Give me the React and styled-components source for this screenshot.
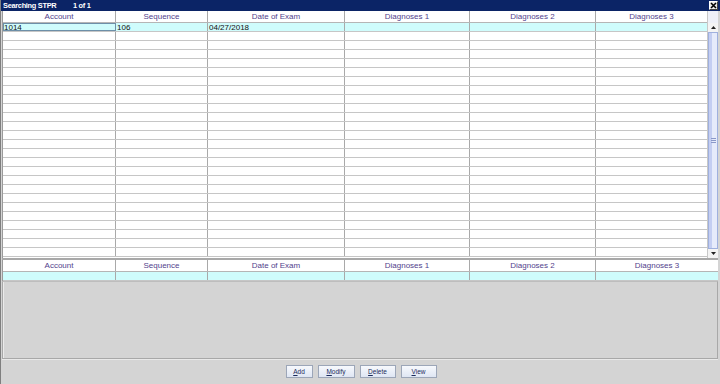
import React from "react";
import styled, { createGlobalStyle } from "styled-components";

const Global = createGlobalStyle`
  html, body { margin: 0; padding: 0; background: #d4d4d4; }
  body { font-family: "Liberation Sans", Arial, sans-serif; }
`;

const COLS = "113px 92px 137px 125px 126px 1fr";

const Window = styled.div`
  width: 720px;
  height: 384px;
  display: flex;
  flex-direction: column;
  background: #d4d4d4;
  box-sizing: border-box;
  border-left: 1px solid #7f7f7f;
  overflow: hidden;
`;

const TitleBar = styled.div`
  height: 11px;
  flex: none;
  background: #0b2466;
  display: flex;
  align-items: center;
  padding-left: 2px;
  color: #fff;
  font: bold 7.4px "Liberation Sans", Arial, sans-serif;
  letter-spacing: -0.3px;
`;

const TitleText = styled.span`
  width: 70px;
`;

const TitleSpacer = styled.span`
  flex: 1;
`;

const CloseBtn = styled.div`
  width: 9px;
  height: 9px;
  margin-right: 2px;
  background: #e8e8e8;
  border: 1px solid #fff;
  border-right-color: #404040;
  border-bottom-color: #404040;
  box-sizing: border-box;
  display: flex;
  align-items: center;
  justify-content: center;
`;

const Body = styled.div`
  flex: 1;
  display: flex;
  flex-direction: column;
  padding: 0 2px 0 1px;
  min-height: 0;
`;

const TopArea = styled.div`
  display: flex;
  height: 247px;
  flex: none;
  border-bottom: 2px solid #a8a8a8;
  background: #fff;
`;

const Table = styled.div`
  flex: 1;
  display: flex;
  flex-direction: column;
  border-left: 1px solid #9a9a9a;
  min-width: 0;
`;

const Row = styled.div`
  display: grid;
  grid-template-columns: ${COLS};
  height: ${(p) => p.$h}px;
  box-sizing: border-box;
  border-bottom: 1px solid ${(p) => (p.$head ? "#b5b5b5" : "#c6c6c6")};
  background: ${(p) => (p.$sel ? "#cffcfc" : "#fff")};
  flex: none;
`;

const Cell = styled.div`
  border-right: 1px solid #a9a9a9;
  box-sizing: border-box;
  font-size: 8px;
  line-height: ${(p) => p.$lh}px;
  color: ${(p) => (p.$head ? "#52428c" : "#111")};
  text-align: ${(p) => (p.$head ? "center" : "left")};
  padding-left: ${(p) => (p.$head ? 0 : 1)}px;
  white-space: nowrap;
  overflow: hidden;
  ${(p) => (p.$focus ? "outline: 1px solid #6d8fa8; outline-offset: -1px;" : "")}
  &:last-child { border-right: none; }
`;

const Scrollbar = styled.div`
  width: 10px;
  flex: none;
  display: flex;
  flex-direction: column;
  background: #eef0f8;
  border-left: 1px solid #c8c8c8;
  padding-top: 12px;
`;

const Arrow = styled.div`
  height: 9px;
  flex: none;
  display: flex;
  align-items: center;
  justify-content: center;
  background: #f4f4f4;
`;

const Thumb = styled.div`
  flex: 1;
  background: linear-gradient(to right, #c4cef2 0, #c4cef2 3px, #e6ebfb 3px, #e6ebfb 8px, #b5c0e4 8px);
  border: 1px solid #9fb0de;
  box-sizing: border-box;
  display: flex;
  align-items: center;
  justify-content: center;
`;

const Grip = styled.div`
  width: 5px;
  height: 5px;
  border-top: 1px solid #8a98c8;
  border-bottom: 1px solid #8a98c8;
  box-sizing: border-box;
  position: relative;
  &::after {
    content: "";
    position: absolute;
    left: 0;
    right: 0;
    top: 1px;
    border-top: 1px solid #8a98c8;
  }
`;

const BottomGrid = styled.div`
  display: flex;
  flex-direction: column;
  flex: none;
  background: #fff;
  border-left: 1px solid #9a9a9a;
`;

const Panel = styled.div`
  flex: 1;
  border: 1px solid #a8a8a8;
  border-top: 1px solid #bdbdbd;
  box-shadow: inset 1px 0 0 #ebebeb;
  background: #d4d4d4;
`;

const ButtonBar = styled.div`
  height: 22px;
  flex: none;
  display: flex;
  align-items: center;
  justify-content: center;
  gap: 5px;
  padding-left: 2px;
  border-top: 1px solid #e9e9e9;
`;

const Button = styled.div`
  width: ${(p) => p.$w}px;
  height: 13px;
  box-sizing: border-box;
  border: 1px solid #9ca6b8;
  background: linear-gradient(#f7f9fd, #dfe6f3);
  font-size: 6.5px;
  color: #1c2a5a;
  display: flex;
  align-items: center;
  justify-content: center;
  & u { text-decoration: underline; }
`;

const Footer = styled.div`
  height: 2px;
  flex: none;
  background: #d4d4d4;
`;

const heads = ["Account", "Sequence", "Date of Exam", "Diagnoses 1", "Diagnoses 2", "Diagnoses 3"];

function HeaderRow() {
  return (
    <Row $h={12} $head>
      {heads.map((h) => (
        <Cell key={h} $head $lh={11}>
          {h}
        </Cell>
      ))}
    </Row>
  );
}

function DataRow({ values, sel, focus }) {
  return (
    <Row $h={9} $sel={sel}>
      {heads.map((h, i) => (
        <Cell key={h} $lh={9} $focus={focus && i === 0}>
          {values ? values[i] : ""}
        </Cell>
      ))}
    </Row>
  );
}

export default function App() {
  const empty = Array.from({ length: 25 });
  return (
    <>
      <Global />
      <Window>
        <TitleBar>
          <TitleText>Searching STPR</TitleText>
          <span>1 of 1</span>
          <TitleSpacer />
          <CloseBtn>
            <svg width="7" height="7" viewBox="0 0 7 7">
              <path d="M1 1 L6 6 M6 1 L1 6" stroke="#000" strokeWidth="1.6" />
            </svg>
          </CloseBtn>
        </TitleBar>
        <Body>
          <TopArea>
            <Table>
              <HeaderRow />
              <DataRow values={["1014", "106", "04/27/2018", "", "", ""]} sel focus />
              {empty.map((_, i) => (
                <DataRow key={i} />
              ))}
            </Table>
            <Scrollbar>
              <Arrow>
                <svg width="5" height="3" viewBox="0 0 5 3">
                  <path d="M0 3 L2.5 0 L5 3 Z" fill="#222" />
                </svg>
              </Arrow>
              <Thumb>
                <Grip />
              </Thumb>
              <Arrow>
                <svg width="5" height="3" viewBox="0 0 5 3">
                  <path d="M0 0 L5 0 L2.5 3 Z" fill="#222" />
                </svg>
              </Arrow>
            </Scrollbar>
          </TopArea>
          <BottomGrid>
            <HeaderRow />
            <DataRow sel />
          </BottomGrid>
          <Panel />
          <ButtonBar>
            <Button $w={27}><span><u>A</u>dd</span></Button>
            <Button $w={37}><span><u>M</u>odify</span></Button>
            <Button $w={36}><span><u>D</u>elete</span></Button>
            <Button $w={36}><span><u>V</u>iew</span></Button>
          </ButtonBar>
          <Footer />
        </Body>
      </Window>
    </>
  );
}
